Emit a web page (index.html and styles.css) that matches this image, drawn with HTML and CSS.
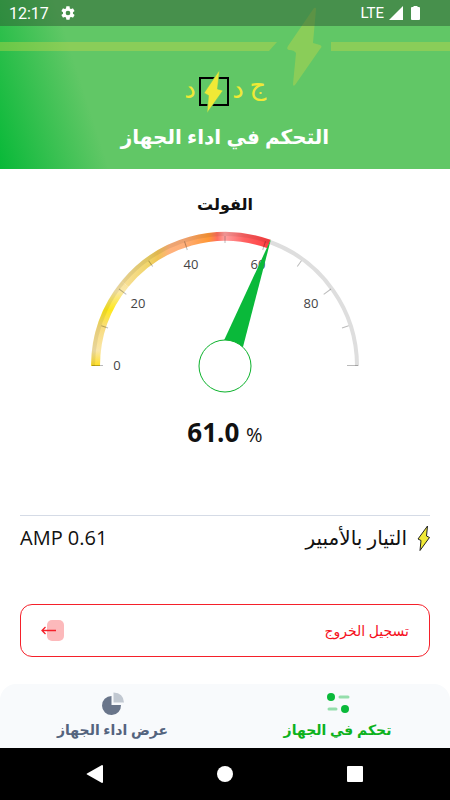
FILE: index.html
```
<!DOCTYPE html>
<html lang="ar" dir="rtl">
  <head>
    <meta charset="UTF-8" />
    <meta name="viewport" content="width=device-width, initial-scale=1.0" />
    <title>التحكم في اداء الجهاز</title>
    <link rel="stylesheet" href="styles.css">
  </head>
  <body>
    <header class="header">
      <svg class="header-line" width="450" height="100" viewBox="0 0 450 100" aria-hidden="true">
        <path d="M-600 42H277L269 51H-600zM331 42H1050V51H331z"/>
        <path d="M314 8Q316 7 316 9L313 43L320 45Q323 46 320 49L295 85Q293 87 293 84L296 53Q294 50 289 50Q286 49 288 46z"/>
      </svg>
      <div class="status" dir="ltr">
        <span class="time">12:17</span>
        <svg width="16" height="16" viewBox="0 0 24 24" fill="#fff"><path d="M19.4 13l.1-1-.1-1 2.1-1.6c.2-.2.3-.4.1-.7l-2-3.4c-.1-.2-.4-.3-.6-.2l-2.5 1-1.7-1-.4-2.6c0-.3-.2-.5-.5-.5h-4c-.3 0-.5.2-.5.5L9 5.100 7.400 6.100l-2.500-1c-.2-.1-.5 0-.6.2l-2 3.400c-.1.3 0 .5.1.7L4.600 11l-.1 1 .1 1-2.200 1.600c-.1.2-.2.4-.1.7l2 3.400c.1.2.4.3.6.2l2.500-1 1.600 1 .4 2.600c.1.3.3.5.6.5h4c.3 0 .5-.2.5-.5l.4-2.600 1.700-1 2.500 1c.2.1.5 0 .6-.2l2-3.400c.2-.3.1-.5-.1-.7zM12 15.500a3.500 3.500 0 1 1 0-7 3.500 3.500 0 0 1 0 7z"/></svg>
        <span class="network">LTE</span>
        <svg width="14" height="14" viewBox="0 0 14 14" fill="#fff"><path d="M14 0V14H0z"/></svg>
        <svg class="battery" width="9" height="14" viewBox="0 0 9 14" fill="#fff"><path d="M2.500 0h4v1H8q1 0 1 1V13q0 1-1 1H1q-1 0-1-1V2q0-1 1-1h1.500z"/></svg>
      </div>
      <svg class="logo" width="90" height="46" viewBox="0 0 90 46" role="img" aria-label="جدد">
        <g class="logo-text">
          <text x="78" y="26">ج</text>
          <text x="58" y="30">د</text>
          <text x="10" y="30">د</text>
        </g>
        <rect x="20" y="10" width="28" height="27" fill="none" stroke="#000" stroke-width="2"/>
        <path d="M39.500 2L24 25L28.500 27.500L27 45L43 22.500L37.500 21z" fill="#f0e936" stroke="#61c766" stroke-width=".6"/>
      </svg>
      <h1 class="title">التحكم في اداء الجهاز</h1>
    </header>

    <main class="main">
      <h2 class="name">الفولت</h2>
      <svg class="gauge" width="270" height="164" viewBox="90 230 270 164" direction="ltr">
        <defs>
          <linearGradient id="low" gradientUnits="userSpaceOnUse" x1="0" y1="366" x2="0" y2="281">
            <stop offset="0" stop-color="#ffdf20"/>
            <stop offset=".04" stop-color="#ffe040"/>
            <stop offset=".18" stop-color="#fae6a8"/>
            <stop offset=".45" stop-color="#f8dc80"/>
            <stop offset=".66" stop-color="#ffe91c"/>
            <stop offset=".88" stop-color="#fae8a8"/>
            <stop offset="1" stop-color="#f8e09a"/>
          </linearGradient>
          <linearGradient id="high" gradientUnits="userSpaceOnUse" x1="122" y1="0" x2="271" y2="0">
            <stop offset="0" stop-color="#f8e09a"/>
            <stop offset=".18" stop-color="#f0d468"/>
            <stop offset=".24" stop-color="#f0c455"/>
            <stop offset=".32" stop-color="#ffb27c"/>
            <stop offset=".42" stop-color="#ffae78"/>
            <stop offset=".58" stop-color="#ff9836"/>
            <stop offset=".64" stop-color="#ff6f60"/>
            <stop offset=".69" stop-color="#ffa0a0"/>
            <stop offset=".82" stop-color="#ff6262"/>
            <stop offset="1" stop-color="#ff3a3e"/>
          </linearGradient>
        </defs>
        <path d="M95.500 366A129.500 129.500 0 0 1 125 284" fill="none" stroke="url(#low)" stroke-width="9"/>
        <path d="M125 284A129.500 129.500 0 0 1 269 244" fill="none" stroke="url(#high)" stroke-width="9"/>
        <path d="M93 366A132 132 0 0 1 270 242" fill="none" stroke="#000" stroke-opacity=".07" stroke-width="4"/>
        <path d="M270 242A132 132 0 0 1 357 366" fill="none" stroke="#dedede" stroke-width="4"/>
        <g stroke="#000" stroke-opacity=".27" stroke-width="1">
          <path d="M92 365.500h11"/>
          <path d="M95 366h7" transform="rotate(18 225 366)"/>
          <path d="M94 366h9" transform="rotate(36 225 366)"/>
          <path d="M95 366h7" transform="rotate(54 225 366)"/>
          <path d="M94 366h9" transform="rotate(72 225 366)"/>
          <path d="M95 366h7" transform="rotate(90 225 366)"/>
          <path d="M94 366h9" transform="rotate(108 225 366)"/>
          <path d="M95 366h7" transform="rotate(126 225 366)"/>
          <path d="M94 366h9" transform="rotate(144 225 366)"/>
          <path d="M95 366h7" transform="rotate(162 225 366)"/>
          <path d="M347 365.500h11"/>
        </g>
        <g class="scale">
          <text x="117" y="370">0</text>
          <text x="138" y="308">20</text>
          <text x="191" y="269">40</text>
          <text x="258" y="269">60</text>
          <text x="311" y="308">80</text>
        </g>
        <path d="M271 239L214 362L237 370z" fill="#0ab93a"/>
        <circle cx="225" cy="366" r="26" fill="#fff" stroke="#0cb22c"/>
      </svg>
      <p class="percent" dir="ltr">61.0 <span class="sign">%</span></p>

      <div class="current">
        <svg width="13" height="28" viewBox="0 0 13 28" fill="#f0e936" stroke="#222" stroke-linejoin="round"><path d="M10.500 2L1 15L4 16.500L3 26.500L12.500 13.500L9.500 12z"/></svg>
        <span>التيار بالأمبير</span>
        <span class="amp" dir="ltr">AMP 0.61</span>
      </div>

      <button class="logout" type="button">
        <span>تسجيل الخروج</span>
        <svg width="24" height="22" viewBox="0 0 24 22" fill="none">
          <rect x="6" width="17" height="21" rx="5" fill="#fcb9bb"/>
          <path d="M15 10.500H1M4.500 7L1 10.500L4.500 14" stroke="#f5202a" stroke-width="1.300"/>
        </svg>
      </button>
    </main>

    <nav class="tabs">
      <a href="#control" class="tab active">
        <svg width="24" height="24" viewBox="0 0 24 24">
          <circle cx="5" cy="5" r="4" fill="#0ab93a"/>
          <circle cx="19" cy="17" r="4" fill="#0ab93a"/>
          <path d="M14 5h8M3 17h7" stroke="#94deab" stroke-width="3" stroke-linecap="round"/>
        </svg>
        <span>تحكم في الجهاز</span>
      </a>
      <a href="#view" class="tab">
        <svg width="24" height="24" viewBox="0 0 24 24">
          <path d="M10.500 4V13H20A9.500 9.500 0 1 1 10.500 4z" fill="#69758a"/>
          <path d="M12.500 .500V10.500H23Q22.500 1 12.500 .500z" fill="#c1c8d1"/>
        </svg>
        <span>عرض اداء الجهاز</span>
      </a>
    </nav>

    <div class="system" dir="ltr">
      <button type="button" aria-label="رجوع"><svg width="18" height="18" viewBox="0 0 18 18"><path d="M16 0Q17 0 17 1V17Q17 18 16 18L1 9.500Q0 9 1 8.500z"/></svg></button>
      <button type="button" aria-label="الرئيسية"><svg width="18" height="18" viewBox="0 0 18 18"><circle cx="9" cy="9" r="8"/></svg></button>
      <button type="button" aria-label="التطبيقات"><svg width="18" height="18" viewBox="0 0 18 18"><rect x="1" y="1" width="16" height="16" rx="1"/></svg></button>
    </div>
  </body>
</html>
```
FILE: styles.css
```
* {
  margin: 0;
  padding: 0;
  box-sizing: border-box;
}
body {
  min-height: 100vh;
  display: flex;
  flex-direction: column;
  background-color: #fff;
  color: #111;
  font-family: "Open Sans", "DejaVu Sans", sans-serif;
}
svg {
  display: block;
  flex: none;
}
button {
  font-family: inherit;
  border: none;
  background: none;
  cursor: pointer;
}

/* header */
.header {
  position: relative;
  overflow: hidden;
  display: flex;
  flex-direction: column;
  align-items: center;
  padding-bottom: 12px;
  background: linear-gradient(72deg, #08b938 0, #61c766 104px);
}
.header-line {
  position: absolute;
  top: 0;
  left: 50%;
  margin-left: -225px;
  overflow: visible;
  fill: rgba(200, 216, 70, 0.4);
}
.status {
  position: relative;
  width: 100%;
  height: 26px;
  display: flex;
  align-items: center;
  padding: 0 30px 0 9px;
  background-color: rgba(45, 90, 50, 0.5);
  color: #fff;
  font: 16px Roboto, sans-serif;
}
.time {
  margin-right: 11px;
}
.network {
  margin-left: auto;
  margin-right: 5px;
  font-size: 15px;
}
.battery {
  margin-left: 8px;
}
.logo {
  position: relative;
  margin-top: 42px;
}
.logo-text {
  fill: #f0e936;
  font: 26px "DejaVu Sans", sans-serif;
  text-anchor: middle;
}
.title {
  position: relative;
  margin-top: 3px;
  line-height: 40px;
  font-size: 20px;
  color: #fff;
}

/* gauge */
.main {
  flex: 1;
  display: flex;
  flex-direction: column;
  padding: 19px 20px 26px;
}
.name {
  line-height: 32px;
  font-size: 16px;
  text-align: center;
}
.gauge {
  margin: 10px auto 0;
}
.scale {
  fill: #444;
  font-size: 13px;
  text-anchor: middle;
}
.percent {
  margin-top: 18px;
  line-height: 40px;
  font-size: 26px;
  font-weight: bold;
  text-align: center;
}
.sign {
  font-size: 20px;
  font-weight: normal;
}
.current {
  display: flex;
  align-items: center;
  gap: 10px;
  margin-top: 60px;
  height: 44px;
  border-top: 1px solid #d5dbe6;
  font-size: 20px;
}
.amp {
  margin-right: auto;
}
.logout {
  display: flex;
  align-items: center;
  justify-content: space-between;
  margin-top: 45px;
  height: 53px;
  padding: 0 20px;
  border: 1px solid #f5202a;
  border-radius: 12px;
  color: #f5101c;
  font-size: 14px;
}

/* bottom */
.tabs {
  display: flex;
  height: 64px;
  border-radius: 16px 16px 0 0;
  background-color: #f8fafc;
}
.tab {
  flex: 1;
  display: flex;
  flex-direction: column;
  align-items: center;
  padding-top: 8px;
  color: #54647e;
  font-size: 14px;
  font-weight: bold;
  line-height: 28px;
  text-decoration: none;
}
.active {
  color: #0cb21c;
}
.system {
  display: flex;
  justify-content: center;
  gap: 112px;
  height: 52px;
  background-color: #000;
}
.system svg {
  fill: #fff;
}
```
